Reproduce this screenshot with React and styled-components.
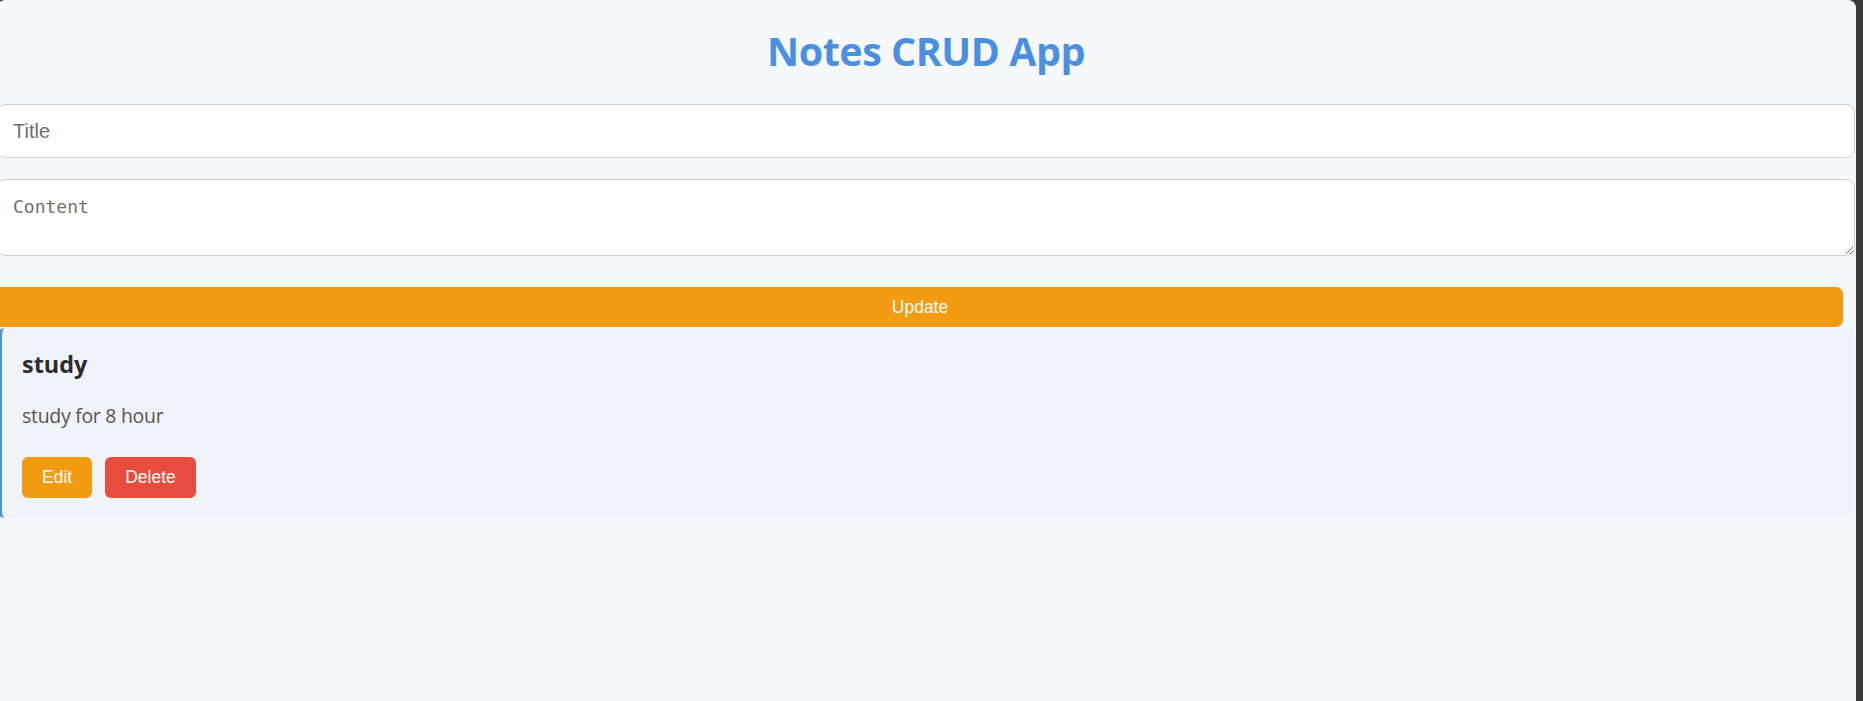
import React, { useState } from "react";
import styled, { createGlobalStyle } from "styled-components";

const GlobalStyle = createGlobalStyle`
  html, body {
    margin: 0;
    padding: 0;
    background: #383838;
    overflow: hidden;
  }
  * {
    box-sizing: border-box;
  }
`;

const Frame = styled.div`
  width: 1859px;
  min-height: 701px;
  margin-left: -3px;
  padding-right: 1px;
  background: #f7f8fc;
  border-radius: 8px 8px 0 0;
  font-family: "Open Sans", "Noto Sans", sans-serif;
  display: flex;
  flex-direction: column;
`;

const Heading = styled.h1`
  margin: 24px 0 25px;
  text-align: center;
  font-size: 39.5px;
  font-weight: 700;
  line-height: 55px;
  letter-spacing: -0.5px;
  color: #4a90e2;
`;

const Field = styled.input`
  display: block;
  width: 100%;
  height: 54px;
  padding: 14px 15px;
  border: 1px solid #cfcfd4;
  border-radius: 8px;
  background: #fff;
  font-family: "Liberation Sans", Arial, sans-serif;
  font-size: 20px;
  line-height: 24px;
  color: #222;
  outline: none;

  &::placeholder {
    color: #707070;
  }
`;

const Area = styled.textarea`
  display: block;
  width: 100%;
  height: 77px;
  margin-top: 21px;
  padding: 14px 15px;
  border: 1px solid #cfcfd4;
  border-radius: 8px;
  background: #fff;
  font-family: "DejaVu Sans Mono", monospace;
  font-size: 18px;
  line-height: 26px;
  color: #222;
  outline: none;

  &::placeholder {
    color: #707070;
  }
`;

const Button = styled.button`
  border: none;
  border-radius: 6px;
  color: #fff;
  font-family: "Liberation Sans", Arial, sans-serif;
  font-size: 17.5px;
  line-height: 21px;
  padding: 10px 20px;
  cursor: pointer;
  background: ${(p) => (p.$tone === "danger" ? "#e74c3c" : "#f39c12")};
`;

const SubmitButton = styled(Button)`
  display: block;
  width: calc(100% - 12px);
  height: 40px;
  margin-top: 31px;
  padding: 0;
  line-height: 40px;
  border-radius: 0 7px 7px 0;
`;

const NoteCard = styled.div`
  margin-top: 1px;
  padding: 20px;
  border-left: 5px solid #4a90e2;
  border-radius: 8px;
  background: #f0f4f9;
`;

const NoteTitle = styled.h3`
  margin: 0 0 22px;
  font-size: 23.4px;
  line-height: 32px;
  font-weight: 700;
  color: #2b2b2b;
`;

const NoteBody = styled.p`
  margin: 0 0 28px;
  font-size: 19.5px;
  line-height: 27px;
  letter-spacing: -0.3px;
  color: #555;
`;

const Actions = styled.div`
  display: flex;
  gap: 13px;
`;

export default function App() {
  const [title, setTitle] = useState("");
  const [content, setContent] = useState("");
  const notes = [{ id: 1, title: "study", content: "study for 8 hour" }];

  return (
    <>
      <GlobalStyle />
      <Frame>
        <Heading>Notes CRUD App</Heading>
        <Field
          placeholder="Title"
          value={title}
          onChange={(e) => setTitle(e.target.value)}
        />
        <Area
          placeholder="Content"
          value={content}
          onChange={(e) => setContent(e.target.value)}
        />
        <SubmitButton>Update</SubmitButton>
        {notes.map((n) => (
          <NoteCard key={n.id}>
            <NoteTitle>{n.title}</NoteTitle>
            <NoteBody>{n.content}</NoteBody>
            <Actions>
              <Button>Edit</Button>
              <Button $tone="danger">Delete</Button>
            </Actions>
          </NoteCard>
        ))}
      </Frame>
    </>
  );
}
